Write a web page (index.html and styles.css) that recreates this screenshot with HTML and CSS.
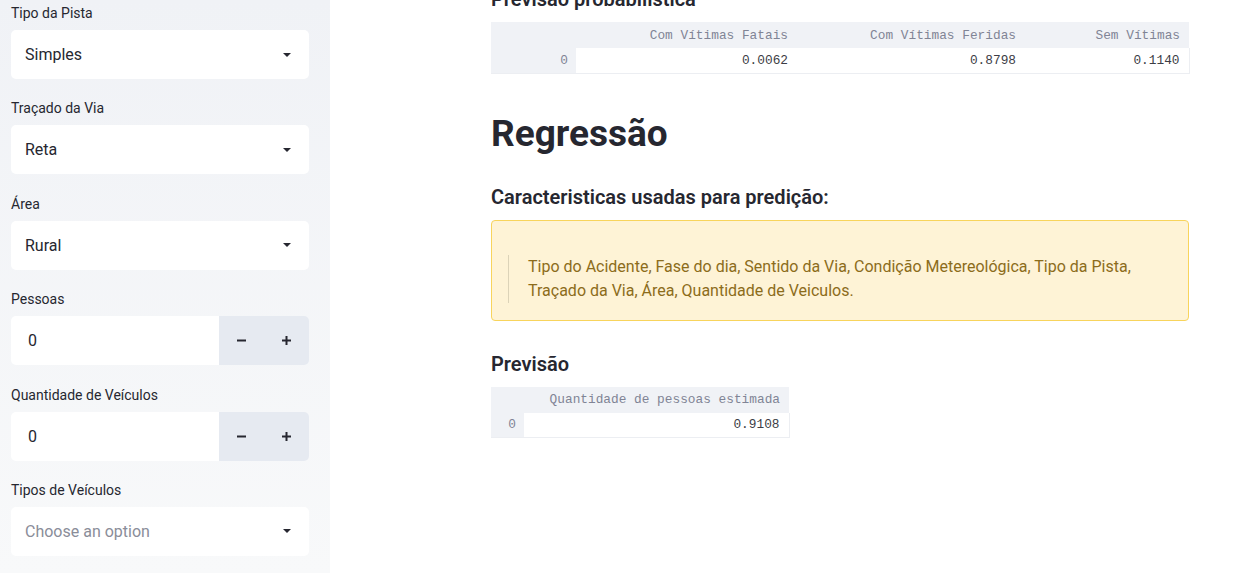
FILE: index.html
```html
<!DOCTYPE html>
<html lang="pt">
<head>
<meta charset="utf-8">
<title>Previsão</title>
<link rel="stylesheet" href="styles.css">
</head>
<body>
<div class="app">
  <aside class="sidebar">
    <div class="field">
      <div class="label">Tipo da Pista</div>
      <div class="select"><span class="value">Simples</span><span class="caret"></span></div>
    </div>
    <div class="field">
      <div class="label">Traçado da Via</div>
      <div class="select"><span class="value">Reta</span><span class="caret"></span></div>
    </div>
    <div class="field">
      <div class="label">Área</div>
      <div class="select"><span class="value">Rural</span><span class="caret"></span></div>
    </div>
    <div class="field">
      <div class="label">Pessoas</div>
      <div class="number">
        <span class="num-value">0</span>
        <span class="step"><svg width="9" height="9" viewBox="0 0 9 9"><rect x="0" y="3.5" width="9" height="2" fill="#262730"/></svg></span>
        <span class="step"><svg width="9" height="9" viewBox="0 0 9 9"><rect x="0" y="3.5" width="9" height="2" fill="#262730"/><rect x="3.5" y="0" width="2" height="9" fill="#262730"/></svg></span>
      </div>
    </div>
    <div class="field">
      <div class="label">Quantidade de Veículos</div>
      <div class="number">
        <span class="num-value">0</span>
        <span class="step"><svg width="9" height="9" viewBox="0 0 9 9"><rect x="0" y="3.5" width="9" height="2" fill="#262730"/></svg></span>
        <span class="step"><svg width="9" height="9" viewBox="0 0 9 9"><rect x="0" y="3.5" width="9" height="2" fill="#262730"/><rect x="3.5" y="0" width="2" height="9" fill="#262730"/></svg></span>
      </div>
    </div>
    <div class="field">
      <div class="label">Tipos de Veículos</div>
      <div class="select"><span class="value placeholder">Choose an option</span><span class="caret"></span></div>
    </div>
  </aside>
  <main class="main">
    <div class="block">
      <h3 class="h3 first">Previsão probabilística</h3>
      <table class="df df-prob">
        <colgroup><col class="c-idx"><col class="c1"><col class="c2"><col class="c3"></colgroup>
        <thead><tr><th class="idx"></th><th>Com Vítimas Fatais</th><th>Com Vítimas Feridas</th><th>Sem Vítimas</th></tr></thead>
        <tbody><tr><th class="idx">0</th><td>0.0062</td><td>0.8798</td><td class="last">0.1140</td></tr></tbody>
      </table>
      <h1 class="h1">Regressão</h1>
      <h3 class="h3 sub">Caracteristicas usadas para predição:</h3>
      <div class="alert">
        <blockquote class="quote">Tipo do Acidente, Fase do dia, Sentido da Via, Condição Metereológica, Tipo da Pista, Traçado da Via, Área, Quantidade de Veiculos.</blockquote>
      </div>
      <h3 class="h3 sub2">Previsão</h3>
      <table class="df df-reg">
        <colgroup><col class="r-idx"><col class="r1"></colgroup>
        <thead><tr><th class="idx"></th><th>Quantidade de pessoas estimada</th></tr></thead>
        <tbody><tr><th class="idx">0</th><td class="last">0.9108</td></tr></tbody>
      </table>
    </div>
  </main>
</div>
</body>
</html>
```

FILE: styles.css
```css
* { box-sizing: border-box; }
html, body { margin: 0; height: 100%; }
body {
  font-family: Roboto, "Noto Sans", sans-serif;
  color: #262730;
  background: #fff;
  overflow: hidden;
}
.app { display: flex; height: 573px; }

.sidebar {
  width: 330px;
  flex: none;
  background: linear-gradient(180deg, #f0f2f6 0%, #f8f9fa 100%);
  padding: 4px 21px 0 11px;
}
.field { margin-bottom: 20.4px; }
.label {
  font-size: 14px;
  line-height: 18px;
  height: 18px;
  margin-bottom: 8px;
  color: #262730;
}
.select {
  height: 49px;
  background: #fff;
  border-radius: 5px;
  display: flex;
  align-items: center;
  padding: 0 18px 0 14px;
}
.value { flex: 1; font-size: 16px; color: #262730; }
.value.placeholder { color: #8a8d99; }
.caret {
  width: 0; height: 0;
  border-left: 4px solid transparent;
  border-right: 4px solid transparent;
  border-top: 4px solid #262730;
}
.number {
  height: 49px;
  display: flex;
  border-radius: 5px;
  overflow: hidden;
}
.num-value {
  width: 208px;
  background: #fff;
  display: flex;
  align-items: center;
  padding-left: 17px;
  font-size: 16px;
}
.step {
  width: 45px;
  background: #e6eaf1;
  display: flex;
  align-items: center;
  justify-content: center;
}
.step svg { display: block; }

.main { flex: 1; padding-left: 161px; }
.block { width: 698px; margin-top: -15px; }

.h3 {
  margin: 0 0 9px;
  font-size: 20px;
  line-height: 28px;
  font-weight: 600;
}
.h1 {
  margin: 38px 0 0;
  font-size: 37px;
  line-height: 43px;
  font-weight: 700;
}
.h3.sub { margin-top: 28px; }
.h3.sub2 { margin-top: 29px; }

.df {
  border-collapse: collapse;
  table-layout: fixed;
  font-family: "Liberation Mono", "DejaVu Sans Mono", monospace;
  font-size: 12.8px;
}
.df-prob { width: 698px; }
.df-reg { width: 298px; }
.c-idx { width: 85px; }
.c1 { width: 221px; }
.c2 { width: 228px; }
.c3 { width: 164px; }
.r-idx { width: 33px; }
.r1 { width: 265px; }
.df th, .df td {
  text-align: right;
  padding: 0 9px 0 0;
  font-weight: 400;
  white-space: nowrap;
}
.df thead th {
  height: 26px;
  background: #f0f2f6;
  color: #808495;
}
.df tbody th, .df tbody td {
  height: 25px;
  border-bottom: 1px solid #eceef2;
}
.df tbody th.idx {
  background: #f0f2f6;
  color: #808495;
  padding-right: 8px;
}
.df tbody td {
  background: #fff;
  color: #3c3d45;
}
.df tbody td.last { border-right: 1px solid #eceef2; }

.alert {
  margin: 0;
  background: #fef3d6;
  border: 1px solid #f8d45c;
  border-radius: 4px;
  padding: 34px 16px 17px;
}
.quote {
  margin: 0;
  border-left: 1px solid #dcd3b8;
  padding-left: 19px;
  font-size: 16px;
  line-height: 24px;
  color: #8c6c1b;
}
```
